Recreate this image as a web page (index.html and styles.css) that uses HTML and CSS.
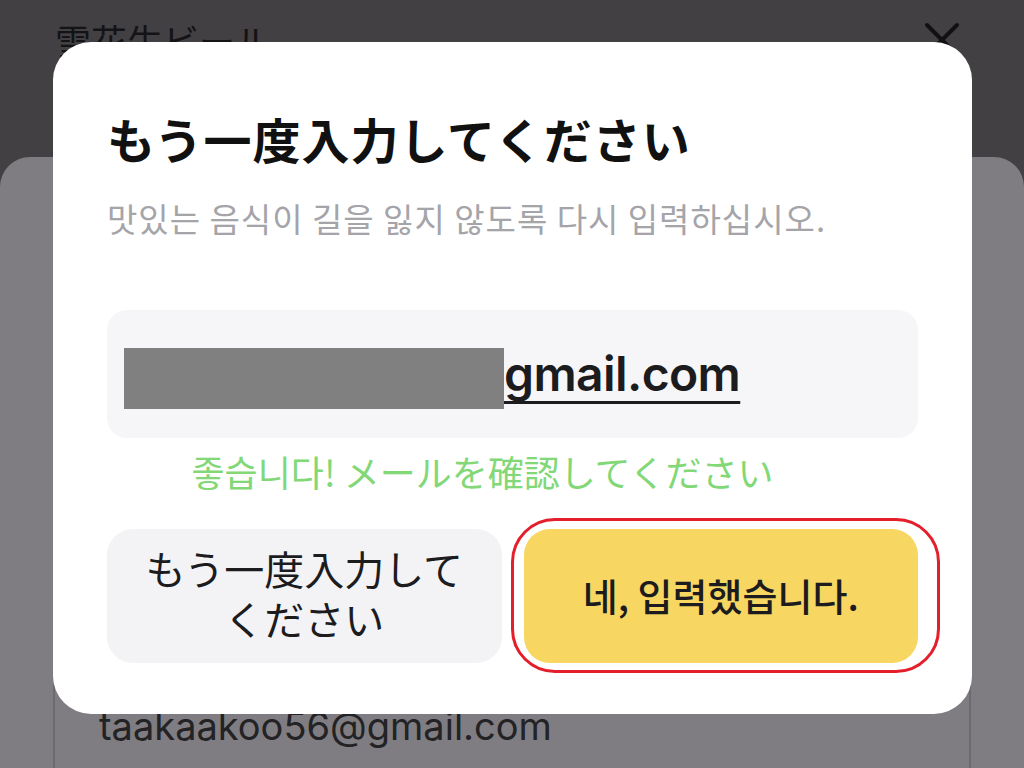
FILE: index.html
```html
<!DOCTYPE html>
<html lang="ja">
<head>
  <meta charset="UTF-8">
  <meta name="viewport" content="width=device-width, initial-scale=1.0">
  <title>もう一度入力してください</title>
  <link rel="stylesheet" href="styles.css">
</head>
<body>
  <div class="header">
    <h1 class="header-title">雪花生ビール</h1>
    <button class="close-btn" aria-label="閉じる">
      <svg width="36" height="36" viewBox="0 0 36 36">
        <path d="M3 3 L33 33 M33 3 L3 33" stroke="#111" stroke-width="4" stroke-linecap="round" fill="none"/>
      </svg>
    </button>
  </div>

  <!-- Sheet behind the dialog -->
  <div class="sheet">
    <div class="email-field">taakaakoo56@gmail.com</div>
  </div>

  <!-- Confirm dialog -->
  <div class="dialog">
    <h2 class="dialog-title">もう一度入力してください</h2>
    <p class="dialog-sub">맛있는 음식이 길을 잃지 않도록 다시 입력하십시오.</p>

    <div class="email-box">
      <span class="mask"></span><span class="email-domain">gmail.com</span>
    </div>
    <p class="hint">좋습니다! メールを確認してください</p>

    <div class="actions">
      <button class="btn btn-retry">もう一度入力して<br>ください</button>
      <div class="btn-wrap">
        <button class="btn btn-ok">네, 입력했습니다.</button>
        <span class="highlight"></span>
      </div>
    </div>
  </div>
</body>
</html>
```

FILE: styles.css
```css
body {
  font-family: 'Noto Sans CJK JP', 'Noto Sans CJK KR', sans-serif;
  margin: 0;
  padding: 0;
  width: 1024px;
  height: 768px;
  overflow: hidden;
  background-color: #424043;
  position: relative;
}

.header {
  display: flex;
  justify-content: space-between;
  align-items: flex-start;
  height: 157px;
  padding: 0 64px 0 55px;
  box-sizing: border-box;
}

.header-title {
  margin: 22px 0 0;
  font-size: 36px;
  font-weight: 400;
  line-height: 1;
  color: #141315;
}

.close-btn {
  margin-top: 22px;
  padding: 0;
  border: none;
  background: transparent;
  line-height: 0;
}

.sheet {
  height: 611px;
  background-color: #7f7d81;
  border-radius: 30px 30px 0 0;
  padding: 0 53px;
  box-sizing: border-box;
  display: flex;
  flex-direction: column;
  justify-content: flex-end;
}

.email-field {
  height: 100px;
  border: 2px solid #6c6a6e;
  border-bottom: none;
  border-radius: 18px 18px 0 0;
  padding: 37px 0 0 44px;
  box-sizing: border-box;
  font-family: Inter, 'Noto Sans', sans-serif;
  font-size: 38px;
  line-height: 1;
  color: #232225;
}

/* dialog lies over the page */
.dialog {
  position: absolute;
  top: 42px;
  left: 53px;
  width: 919px;
  height: 672px;
  box-sizing: border-box;
  padding: 72px 54px 52px;
  background-color: #fff;
  border-radius: 38px;
}

.dialog-title {
  margin: 0;
  font-size: 48px;
  font-weight: 700;
  line-height: 1;
  color: #111;
  letter-spacing: 1px;
}

.dialog-sub {
  margin: 40px 0 0;
  font-family: 'Noto Sans CJK KR', sans-serif;
  font-size: 33px;
  line-height: 1;
  color: #a4a4a9;
  letter-spacing: 1px;
}

.email-box {
  margin-top: 75px;
  height: 128px;
  display: flex;
  align-items: center;
  padding-left: 17px;
  background-color: #f6f6f8;
  border-radius: 20px;
}

.mask {
  display: inline-block;
  width: 380px;
  height: 61px;
  margin-top: 8px;
  background-color: #808080;
}

.email-domain {
  font-family: Inter, Roboto, sans-serif;
  font-size: 48px;
  font-weight: 600;
  line-height: 1;
  color: #1c1c1e;
  text-decoration: underline;
  text-decoration-thickness: 3px;
  text-underline-offset: 10px;
  letter-spacing: -0.6px;
}

.hint {
  margin: 15px 0 0;
  padding-right: 60px;
  text-align: center;
  font-family: 'Noto Sans CJK KR', 'Noto Sans CJK JP', sans-serif;
  font-size: 36px;
  line-height: 1;
  color: #82d877;
}

.actions {
  display: grid;
  grid-template-columns: 1fr 1fr;
  gap: 22px;
  margin-top: 40px;
}

.btn {
  height: 134px;
  width: 100%;
  border: none;
  border-radius: 26px;
  font-family: 'Noto Sans CJK JP', 'Noto Sans CJK KR', sans-serif;
  color: #1c1c1e;
  padding: 0;
}

.btn-retry {
  background-color: #f3f3f6;
  font-size: 40px;
  line-height: 50px;
  padding-bottom: 6px;
}

.btn-wrap {
  position: relative;
}

.btn-ok {
  background-color: #f7d662;
  font-family: 'Noto Sans CJK KR', sans-serif;
  font-size: 38px;
  font-weight: 500;
  padding-bottom: 4px;
}

/* red annotation ring */
.highlight {
  position: absolute;
  top: -11px;
  left: -13px;
  right: -22px;
  bottom: -10px;
  border: 3px solid #e41e2a;
  border-radius: 44px;
  pointer-events: none;
}
```
